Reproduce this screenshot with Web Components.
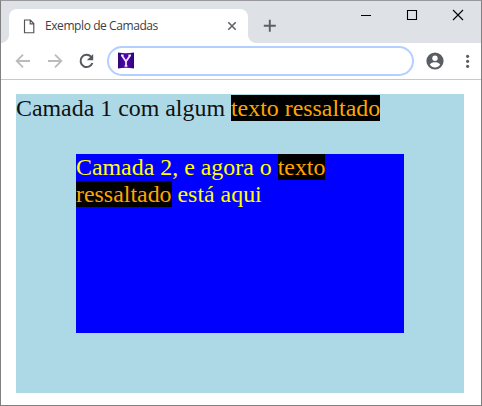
<!DOCTYPE html>
<html lang="pt-BR">
<head>
<meta charset="utf-8">
<title>Exemplo de Camadas</title>
<style>html,body{margin:0;height:100%;overflow:hidden;background:#fff}</style>
</head>
<body>
<browser-window>
  <tab-strip slot="tabs"><browser-tab>Exemplo de Camadas</browser-tab></tab-strip>
  <tool-bar slot="toolbar"></tool-bar>
  <color-layer level="1">Camada 1 com algum <mark-text>texto ressaltado</mark-text>
    <color-layer level="2" slot="inner">Camada 2, e agora o <mark-text>texto</mark-text> <mark-text>ressaltado</mark-text> está aqui</color-layer>
  </color-layer>
</browser-window>
<script>
function define(name, html) {
  customElements.define(name, class extends HTMLElement {
    constructor() {
      super();
      this.attachShadow({mode: 'open'}).innerHTML = html;
    }
  });
}

define('browser-window', `<style>
:host{display:flex;flex-direction:column;box-sizing:border-box;width:482px;height:406px;border:1px solid #808080;border-top-color:#99989c;background:#fff}
main{padding:14px 17px 12px 15px;flex:1}
</style><slot name="tabs"></slot><slot name="toolbar"></slot><main><slot></slot></main>`);

define('tab-strip', `<style>
:host{display:flex;height:42px;box-sizing:border-box;padding:8px 0 0 8px;background:#dee1e6;position:relative}
:host::before{content:"";position:absolute;left:0;bottom:0;width:8px;height:8px;background:radial-gradient(circle at 0 0,#dee1e6 7.5px,#fff 8.2px)}
.plus{margin:10px 0 0 15px}
svg{display:block;flex:none}
.win{margin-left:auto;display:flex;margin-right:17px;gap:34px}
</style><slot></slot>
<svg class="plus" width="13" height="13" viewBox="0 0 13 13"><path d="M6.8 .7v12M.8 6.7h12" stroke="#5c5f63" stroke-width="1.9"/></svg>
<div class="win">
<svg width="12" height="12" viewBox="0 0 12 12"><path d="M1 6.5h10" stroke="#000"/></svg>
<svg width="12" height="12" viewBox="0 0 12 12"><path d="M1.5 1.5h9v9h-9z" fill="none" stroke="#000" stroke-width="1.1"/></svg>
<svg width="12" height="12" viewBox="0 0 12 12"><path d="M1 1l10 10M11 1L1 11" stroke="#000" stroke-width="1.1"/></svg>
</div>`);

define('browser-tab', `<style>
:host{display:flex;align-items:center;box-sizing:border-box;width:239px;height:34px;background:#fff;border-radius:8px 8px 0 0;padding:0 11px 0 14px;position:relative;font:12px/16px "Open Sans","Noto Sans",sans-serif;color:#3c4043}
:host::after{content:"";position:absolute;right:-8px;bottom:0;width:8px;height:8px;background:radial-gradient(circle at 100% 0,#dee1e6 7.5px,#fff 8.2px)}
svg{display:block;flex:none}
span{margin-left:10px;white-space:nowrap;letter-spacing:-.42px}
.close{margin-left:auto}
</style>
<svg width="12" height="15" viewBox="0 0 12 15"><path d="M1.5 1h5.8l3.5 3.6V13.7H1.5zM7.2 1v3.8h3.6" fill="none" stroke="#515357" stroke-width="1.15"/></svg>
<span><slot></slot></span>
<svg class="close" width="10" height="10" viewBox="0 0 10 10"><path d="M1.3 1.3l7.4 7.4M8.7 1.3L1.3 8.7" stroke="#5f6368" stroke-width="1.6"/></svg>`);

define('tool-bar', `<style>
:host{display:flex;align-items:center;box-sizing:border-box;height:37px;padding:0 10px 1px 14px;border-bottom:1px solid #c8c8c8;background:#fff}
svg{display:block;flex:none}
.fwd{margin-left:16px}
.reload{margin-left:15px}
.address{box-sizing:border-box;width:307px;height:30px;border:2px solid #b2cfff;border-radius:15px;margin-left:12px;display:flex;align-items:center;padding-left:9px}
.user{margin-left:12px}
.menu{margin-left:auto}
</style>
<svg width="16" height="16" viewBox="0 0 16 16"><path d="M15 8H2M8 1.7L1.7 8 8 14.3" fill="none" stroke="#b9bbbd" stroke-width="1.8"/></svg>
<svg class="fwd" width="16" height="16" viewBox="0 0 16 16"><path d="M1 8h13M8 1.7L14.3 8 8 14.3" fill="none" stroke="#b9bbbd" stroke-width="1.8"/></svg>
<svg class="reload" width="17" height="16" viewBox="0 0 17 16"><path d="M13 3.6A6.1 6.1 0 1 0 14.4 10" fill="none" stroke="#54575b" stroke-width="2"/><path d="M15.2 1v6.3H8.8z" fill="#54575b"/></svg>
<div class="address"><svg width="16" height="17" viewBox="0 0 16 17"><defs><linearGradient id="g"><stop stop-color="#2c0879"/><stop offset=".5" stop-color="#5700b8"/><stop offset="1" stop-color="#2c0879"/></linearGradient></defs><path d="M0 .5Q8 2 16 .5V16.5Q8 15 0 16.5z" fill="url(#g)"/><path d="M3.9 3.5L8 9.5l4.1-6M8 9v5M3 3.3h2.6M10.4 3.3H13M6.6 14h2.8" fill="none" stroke="#f4ecff" stroke-width="1.7"/></svg></div>
<svg class="user" width="18" height="18" viewBox="0 0 18 18"><circle cx="9" cy="9" r="8.6" fill="#5a5d62"/><circle cx="9" cy="6.3" r="2.7" fill="#fff"/><path d="M3.8 12.8c1-2 3.4-2.6 5.2-2.6s4.2.6 5.2 2.6c-1.2 1.6-3 2.6-5.2 2.6s-4-1-5.2-2.6z" fill="#fff"/></svg>
<svg class="menu" width="6" height="16" viewBox="0 0 6 16"><g fill="#5a5d62"><circle cx="2.6" cy="3.3" r="1.6"/><circle cx="2.6" cy="8.3" r="1.6"/><circle cx="2.6" cy="13.3" r="1.6"/></g></svg>`);

define('mark-text', `<style>:host{display:inline;background:#000;color:orange}</style><slot></slot>`);

define('color-layer', `<style>
:host{display:block;box-sizing:border-box;font:23.9px/27px "Liberation Serif",serif}
:host([level="1"]){width:448px;height:299px;padding-top:1px;background:#add8e6;color:#111}
:host([level="2"]){width:328.4px;height:179px;margin:32px 0 0 60px;background:#00f;color:#ff0}
</style><slot></slot><slot name="inner"></slot>`);
</script>
</body>
</html>
